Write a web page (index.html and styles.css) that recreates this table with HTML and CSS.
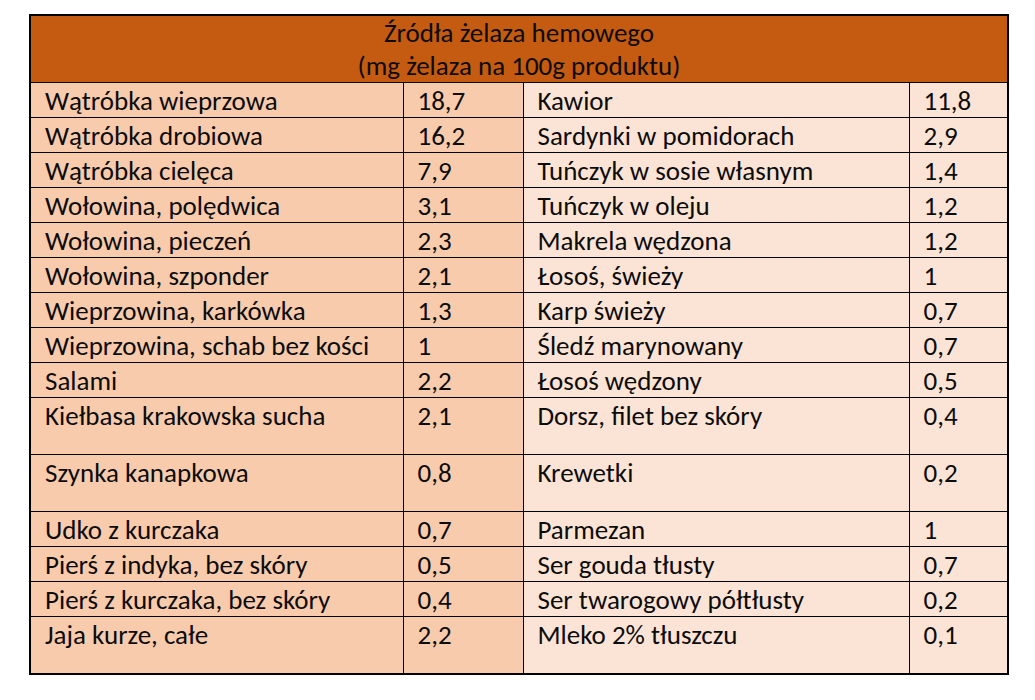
FILE: index.html
```html
<!DOCTYPE html>
<html lang="pl">
<head>
<meta charset="utf-8">
<title>Źródła żelaza hemowego</title>
<link rel="stylesheet" href="styles.css">
</head>
<body>
<table class="iron">
  <colgroup>
    <col class="c-name">
    <col class="c-val">
    <col class="c-name2">
    <col class="c-val2">
  </colgroup>
  <thead>
    <tr><th colspan="4" class="head">Źródła żelaza hemowego<br>(mg żelaza na 100g produktu)</th></tr>
  </thead>
  <tbody>
    <tr><td class="l">Wątróbka wieprzowa</td><td class="l">18,7</td><td class="r">Kawior</td><td class="r">11,8</td></tr>
    <tr><td class="l">Wątróbka drobiowa</td><td class="l">16,2</td><td class="r">Sardynki w pomidorach</td><td class="r">2,9</td></tr>
    <tr><td class="l">Wątróbka cielęca</td><td class="l">7,9</td><td class="r">Tuńczyk w sosie własnym</td><td class="r">1,4</td></tr>
    <tr><td class="l">Wołowina, polędwica</td><td class="l">3,1</td><td class="r">Tuńczyk w oleju</td><td class="r">1,2</td></tr>
    <tr><td class="l">Wołowina, pieczeń</td><td class="l">2,3</td><td class="r">Makrela wędzona</td><td class="r">1,2</td></tr>
    <tr><td class="l">Wołowina, szponder</td><td class="l">2,1</td><td class="r">Łosoś, świeży</td><td class="r">1</td></tr>
    <tr><td class="l">Wieprzowina, karkówka</td><td class="l">1,3</td><td class="r">Karp świeży</td><td class="r">0,7</td></tr>
    <tr><td class="l">Wieprzowina, schab bez kości</td><td class="l">1</td><td class="r">Śledź marynowany</td><td class="r">0,7</td></tr>
    <tr><td class="l">Salami</td><td class="l">2,2</td><td class="r">Łosoś wędzony</td><td class="r">0,5</td></tr>
    <tr class="tall"><td class="l">Kiełbasa krakowska sucha</td><td class="l">2,1</td><td class="r">Dorsz, filet bez skóry</td><td class="r">0,4</td></tr>
    <tr class="tall"><td class="l">Szynka kanapkowa</td><td class="l">0,8</td><td class="r">Krewetki</td><td class="r">0,2</td></tr>
    <tr><td class="l">Udko z kurczaka</td><td class="l">0,7</td><td class="r">Parmezan</td><td class="r">1</td></tr>
    <tr><td class="l">Pierś z indyka, bez skóry</td><td class="l">0,5</td><td class="r">Ser gouda tłusty</td><td class="r">0,7</td></tr>
    <tr><td class="l">Pierś z kurczaka, bez skóry</td><td class="l">0,4</td><td class="r">Ser twarogowy półtłusty</td><td class="r">0,2</td></tr>
    <tr class="tall"><td class="l">Jaja kurze, całe</td><td class="l">2,2</td><td class="r">Mleko 2% tłuszczu</td><td class="r">0,1</td></tr>
  </tbody>
</table>
</body>
</html>
```
FILE: styles.css
```css
html, body {
  margin: 0;
  padding: 0;
  background: #ffffff;
}

body {
  padding: 14px 0 0 29px;
  font-family: "Carlito", "Open Sans", "Liberation Sans", sans-serif;
  color: #0c0c0c;
}

.iron {
  border-collapse: collapse;
  table-layout: fixed;
  width: 978px;
  border: 2px solid #000;
}

.c-name { width: 373px; }
.c-val { width: 120px; }
.c-name2 { width: 386px; }
.c-val2 { width: 99px; }

.head {
  background: #c55a11;
  font-weight: normal;
  font-size: 27px;
  line-height: 33px;
  height: 66px;
  padding: 0;
  text-align: center;
  vertical-align: top;
  border-bottom: 1px solid #000;
}

td {
  font-size: 27px;
  line-height: 32px;
  height: 34px;
  padding: 2px 0 0 14px;
  vertical-align: top;
  text-align: left;
  border: 1px solid #000;
  white-space: nowrap;
  overflow: hidden;
  box-sizing: border-box;
}

.tall td {
  height: 57px;
}

td.l { background: #f8cbad; }
td.r { background: #fbe4d5; }
```
